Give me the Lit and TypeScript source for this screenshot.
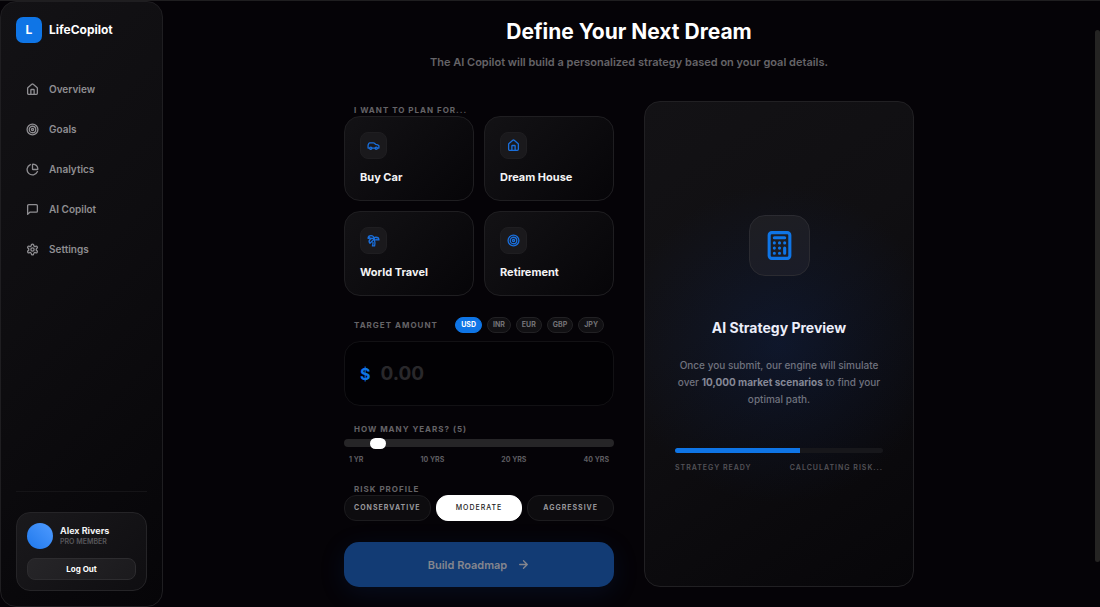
import { LitElement, html, css, svg } from "lit";
import { customElement, property, state } from "lit/decorators.js";
import { classMap } from "lit/directives/class-map.js";

const ICONS: Record<string, unknown> = {
  home: svg`<path d="M15 21v-8a1 1 0 0 0-1-1h-4a1 1 0 0 0-1 1v8"/><path d="M3 10a2 2 0 0 1 .709-1.528l7-5.999a2 2 0 0 1 2.582 0l7 5.999A2 2 0 0 1 21 10v9a2 2 0 0 1-2 2H5a2 2 0 0 1-2-2z"/>`,
  target: svg`<circle cx="12" cy="12" r="10"/><circle cx="12" cy="12" r="6"/><circle cx="12" cy="12" r="2"/>`,
  pie: svg`<path d="M21 12c.552 0 1.005-.449.95-.998a10 10 0 0 0-8.953-8.951c-.55-.055-.998.398-.998.95v8a1 1 0 0 0 1 1z"/><path d="M21.21 15.89A10 10 0 1 1 8 2.83"/>`,
  message: svg`<path d="M21 15a2 2 0 0 1-2 2H7l-4 4V5a2 2 0 0 1 2-2h14a2 2 0 0 1 2 2z"/>`,
  gear: svg`<path d="M12.22 2h-.44a2 2 0 0 0-2 2v.18a2 2 0 0 1-1 1.73l-.43.25a2 2 0 0 1-2 0l-.15-.08a2 2 0 0 0-2.73.73l-.22.38a2 2 0 0 0 .73 2.73l.15.1a2 2 0 0 1 1 1.72v.51a2 2 0 0 1-1 1.74l-.15.09a2 2 0 0 0-.73 2.73l.22.38a2 2 0 0 0 2.73.73l.15-.08a2 2 0 0 1 2 0l.43.25a2 2 0 0 1 1 1.73V20a2 2 0 0 0 2 2h.44a2 2 0 0 0 2-2v-.18a2 2 0 0 1 1-1.73l.43-.25a2 2 0 0 1 2 0l.15.08a2 2 0 0 0 2.73-.73l.22-.39a2 2 0 0 0-.73-2.73l-.15-.08a2 2 0 0 1-1-1.74v-.5a2 2 0 0 1 1-1.74l.15-.09a2 2 0 0 0 .73-2.73l-.22-.38a2 2 0 0 0-2.73-.73l-.15.08a2 2 0 0 1-2 0l-.43-.25a2 2 0 0 1-1-1.73V4a2 2 0 0 0-2-2z"/><circle cx="12" cy="12" r="3"/>`,
  car: svg`<path d="M19 17h2c.6 0 1-.4 1-1v-3c0-.9-.7-1.7-1.5-1.9C18.7 10.6 16 10 16 10s-1.3-1.4-2.2-2.3c-.5-.4-1.1-.7-1.8-.7H5c-.6 0-1.1.4-1.4.9l-1.4 2.9A3.7 3.7 0 0 0 2 12v4c0 .6.4 1 1 1h2"/><circle cx="7" cy="17" r="2"/><path d="M9 17h6"/><circle cx="17" cy="17" r="2"/>`,
  palm: svg`<path d="M13 8c0-2.76-2.46-5-5.5-5S2 5.24 2 8h2l1-1 1 1h4"/><path d="M13 7.14A5.82 5.82 0 0 1 16.5 6c3.04 0 5.5 2.24 5.5 5h-3l-1-1-1 1h-3"/><path d="M5.89 9.71c-2.15 2.15-2.3 5.47-.35 7.43l4.24-4.25.7-.7.71-.71 2.12-2.12c-1.95-1.96-5.27-1.8-7.42.35"/><path d="M11 15.5c.5 2.5-.17 4.5-1 6.5h4c2-5.5-.5-12-1-14"/>`,
  calculator: svg`<rect width="16" height="20" x="4" y="2" rx="2"/><path d="M8 6h8M16 14v4M16 10h.01M12 10h.01M8 10h.01M12 14h.01M8 14h.01M12 18h.01M8 18h.01"/>`,
  arrow: svg`<path d="M5 12h14M12 5l7 7-7 7"/>`,
};

@customElement("app-icon")
class AppIcon extends LitElement {
  @property() name = "home";

  static styles = css`
    :host { display: block; width: 13px; height: 13px; flex: none; }
    .glyph {
      display: block; width: 100%; height: 100%; fill: none; stroke: currentColor;
      stroke-width: 2.4; stroke-linecap: round; stroke-linejoin: round;
    }
  `;

  render() {
    return html`<svg class="glyph" viewBox="0 0 24 24" aria-hidden="true">${ICONS[this.name]}</svg>`;
  }
}

@customElement("app-sidebar")
class AppSidebar extends LitElement {
  static styles = css`
    :host { display: flex; }
    * { box-sizing: border-box; }
    .panel {
      flex: 1; display: flex; flex-direction: column; padding: 15px;
      border: 1px solid #1f1e21; border-radius: 16px;
      background: linear-gradient(135deg, #131215 0%, #0e0d10 45%, #060508 100%);
    }
    .brand { display: flex; align-items: center; gap: 7px; font-size: 12px; line-height: 16px; font-weight: 700; color: #fff; }
    .mark {
      width: 26px; height: 26px; border-radius: 7px; background: #0f75e6;
      display: grid; place-items: center;
    }
    .nav { display: flex; flex-direction: column; gap: 4px; margin-top: 28px; }
    .item {
      display: flex; align-items: center; gap: 10px; height: 36px; padding: 0 10px;
      font-size: 10px; line-height: 16px; font-weight: 600; color: #8f8e92; text-decoration: none;
    }
    .foot { margin-top: auto; padding-top: 20px; border-top: 1px solid #151417; }
    .user {
      display: flex; flex-direction: column; gap: 9px; padding: 10px;
      border: 1px solid #252427; border-radius: 14px;
      background: linear-gradient(135deg, #1a191c, #0f0e11);
    }
    .who { display: flex; align-items: center; gap: 7px; }
    .avatar { width: 26px; height: 26px; border-radius: 50%; background: linear-gradient(45deg, #1f78ec, #4f9bff); }
    .name { font-size: 9px; line-height: 12px; font-weight: 700; color: #f3f3f4; }
    .tier { font-size: 7px; line-height: 10px; font-weight: 600; color: #58575b; }
    .logout {
      height: 22px; border: 1px solid #2d2c2f; border-radius: 8px; padding: 0;
      background: linear-gradient(135deg, #262528, #1b1a1d);
      font: 700 8px/12px Inter, "Liberation Sans", sans-serif; color: #fff;
    }
  `;

  private items = [
    ["home", "Overview"],
    ["target", "Goals"],
    ["pie", "Analytics"],
    ["message", "AI Copilot"],
    ["gear", "Settings"],
  ];

  render() {
    return html`
      <aside class="panel">
        <div class="brand"><span class="mark">L</span>LifeCopilot</div>
        <nav class="nav">
          ${this.items.map(
            ([icon, label]) => html`<a class="item" href="#"><app-icon name=${icon}></app-icon>${label}</a>`
          )}
        </nav>
        <div class="foot">
          <div class="user">
            <div class="who">
              <div class="avatar"></div>
              <div>
                <div class="name">Alex Rivers</div>
                <div class="tier">PRO MEMBER</div>
              </div>
            </div>
            <button class="logout">Log Out</button>
          </div>
        </div>
      </aside>
    `;
  }
}

@customElement("goal-form")
class GoalForm extends LitElement {
  @state() private currency = "USD";
  @state() private risk = "MODERATE";
  @state() private years = 5;

  static styles = css`
    :host { display: block; min-width: 0; }
    * { box-sizing: border-box; }
    button, input { font-family: inherit; margin: 0; }
    .label {
      display: block; padding: 0 10px; font-size: 8px; line-height: 12px;
      font-weight: 700; letter-spacing: 1px; color: #656468; white-space: nowrap;
    }
    .first { padding-top: 3px; }
    .plans { display: grid; grid-template-columns: 1fr 1fr; gap: 10px; }
    .plan {
      display: flex; flex-direction: column; align-items: flex-start; gap: 10px;
      padding: 15px; border: 1px solid #1f1e21; border-radius: 16px;
      background: linear-gradient(135deg, #131215, #060508);
      font-size: 11px; line-height: 16px; font-weight: 700; color: #f3f3f4; text-align: left;
    }
    .tile {
      width: 27px; height: 27px; border-radius: 8px; background: #1a191c;
      border: 1px solid #1f1e21; display: grid; place-items: center; color: #1a6fdc;
    }
    .row { display: flex; align-items: center; justify-content: space-between; padding-right: 10px; margin: 21px 0 8px; }
    .row .label { padding-right: 0; }
    .pills { display: flex; gap: 5px; }
    .pill {
      height: 16px; padding: 0 5px; border: 1px solid #222124; border-radius: 8px;
      background: #111013; font-size: 7px; line-height: 12px; font-weight: 700; color: #747377;
    }
    .pill.on { background: #0f75e6; border-color: #0f75e6; color: #fff; }
    .amount {
      display: flex; align-items: center; gap: 10px; height: 65px; padding: 0 15px;
      border: 1px solid #121114; border-radius: 16px; background: #020104;
    }
    .sign { font-size: 16px; line-height: 20px; font-weight: 700; color: #0f75e6; }
    .field {
      flex: 1; min-width: 0; padding: 0; border: 0; outline: 0; background: none;
      font-size: 19px; line-height: 24px; font-weight: 700; color: #fff;
    }
    .field::placeholder { color: #29282b; opacity: 1; }
    .years { margin-top: 17px; }
    .range {
      display: block; -webkit-appearance: none; appearance: none; width: 100%; height: 11px;
      margin: 2px 0 0; background: none; outline: 0;
    }
    .range::-webkit-slider-runnable-track { height: 8px; border-radius: 4px; background: #262527; }
    .range::-webkit-slider-thumb {
      -webkit-appearance: none; width: 16px; height: 11px; margin-top: -1px; border-radius: 6px; background: #fff;
    }
    .ticks {
      display: flex; justify-content: space-between; padding: 0 5px; margin-top: 6px;
      font-size: 7px; line-height: 12px; font-weight: 700; color: #5e5d61;
    }
    .risk-label { margin-top: 17px; }
    .risks { display: grid; grid-template-columns: repeat(3, minmax(0, 1fr)); gap: 5px; }
    .risk {
      height: 26px; padding: 0; border: 1px solid #1c1b1e; border-radius: 12px; background: #0d0c0f;
      font-size: 7px; line-height: 12px; font-weight: 700; letter-spacing: 1px; color: #98979b;
    }
    .risk.on { background: #fff; border-color: #fff; color: #222; font-weight: 500; }
    .submit {
      display: flex; align-items: center; justify-content: center; gap: 10px;
      width: 100%; height: 45px; margin-top: 21px; border: 0; border-radius: 15px;
      background: #123b74; box-shadow: 0 6px 26px rgba(20, 70, 150, 0.16);
      font-size: 11px; line-height: 16px; font-weight: 600; color: #85868e;
    }
  `;

  private plans = [
    ["car", "Buy Car"],
    ["home", "Dream House"],
    ["palm", "World Travel"],
    ["target", "Retirement"],
  ];

  render() {
    return html`
      <form @submit=${(e: Event) => e.preventDefault()}>
        <div class="label first" id="plan">I WANT TO PLAN FOR...</div>
        <div class="plans" role="group" aria-labelledby="plan">
          ${this.plans.map(
            ([icon, name]) => html`
              <button type="button" class="plan">
                <span class="tile"><app-icon name=${icon}></app-icon></span>
                <span>${name}</span>
              </button>
            `
          )}
        </div>

        <div class="row">
          <label class="label" for="amount">TARGET AMOUNT</label>
          <div class="pills">
            ${["USD", "INR", "EUR", "GBP", "JPY"].map(
              (c) => html`<button
                type="button"
                class=${classMap({ pill: true, on: c === this.currency })}
                @click=${() => (this.currency = c)}
              >${c}</button>`
            )}
          </div>
        </div>
        <div class="amount">
          <span class="sign">$</span>
          <input class="field" id="amount" inputmode="decimal" placeholder="0.00" />
        </div>

        <label class="label years" for="years">HOW MANY YEARS? (${this.years})</label>
        <input
          class="range" id="years" type="range" min="1" max="40" .value=${String(this.years)}
          @input=${(e: Event) => (this.years = Number((e.target as HTMLInputElement).value))}
        />
        <div class="ticks"><span>1 YR</span><span>10 YRS</span><span>20 YRS</span><span>40 YRS</span></div>

        <div class="label risk-label" id="risk">RISK PROFILE</div>
        <div class="risks" role="group" aria-labelledby="risk">
          ${["CONSERVATIVE", "MODERATE", "AGGRESSIVE"].map(
            (r) => html`<button
              type="button"
              class=${classMap({ risk: true, on: r === this.risk })}
              @click=${() => (this.risk = r)}
            >${r}</button>`
          )}
        </div>

        <button class="submit" disabled>Build Roadmap <app-icon name="arrow"></app-icon></button>
      </form>
    `;
  }
}

@customElement("strategy-preview")
class StrategyPreview extends LitElement {
  @property({ type: Number }) progress = 60;

  static styles = css`
    :host { display: flex; min-width: 0; }
    * { box-sizing: border-box; }
    .card {
      flex: 1; display: flex; flex-direction: column; align-items: center; justify-content: center;
      padding: 0 30px; border: 1px solid #212023; border-radius: 16px; text-align: center;
      background:
        radial-gradient(circle 160px at 50% 50%, rgba(16, 50, 120, 0.26), rgba(16, 50, 120, 0.12) 50%, transparent),
        linear-gradient(145deg, #131215 0%, #100f12 40%, #070609 100%);
    }
    .tile {
      width: 61px; height: 61px; border-radius: 16px; border: 1px solid #2b2b31;
      background: linear-gradient(160deg, #1e1e22, #1a1c28);
      display: grid; place-items: center; color: #0f75e6;
    }
    .calc { width: 31px; height: 31px; }
    .title { margin: 42px 0 0; font-size: 14px; line-height: 20px; font-weight: 700; color: #eceefa; }
    .text { margin: 19px 0 0; font-size: 10px; line-height: 17px; font-weight: 500; color: #6f727e; }
    .strong { font-weight: 700; color: #858896; }
    .track { width: 100%; height: 5px; margin-top: 40px; border-radius: 3px; background: #17171b; overflow: hidden; }
    .bar { height: 100%; background: #0f75e6; }
    .legend {
      width: 100%; display: flex; justify-content: space-between; margin-top: 9px;
      font-size: 7px; line-height: 12px; font-weight: 600; letter-spacing: 1px; color: #535257;
      white-space: nowrap;
    }
  `;

  render() {
    return html`
      <section class="card">
        <div class="tile"><app-icon class="calc" name="calculator"></app-icon></div>
        <h2 class="title">AI Strategy Preview</h2>
        <p class="text">
          Once you submit, our engine will simulate over
          <strong class="strong">10,000 market scenarios</strong> to find your optimal path.
        </p>
        <div class="track"><div class="bar" style="width:${this.progress}%"></div></div>
        <div class="legend"><span>STRATEGY READY</span><span>CALCULATING RISK...</span></div>
      </section>
    `;
  }
}

@customElement("app-root")
class AppRoot extends LitElement {
  static styles = css`
    :host {
      display: grid; grid-template-columns: 163px minmax(0, 1fr) 5px; height: 100vh;
      box-sizing: border-box; border-top: 1px solid #1f1e20; background: #050307; overflow: hidden;
      font-family: Inter, "Liberation Sans", sans-serif;
    }
    .main { padding: 15px 16px 20px; overflow: hidden; }
    .head { text-align: center; }
    .heading { margin: 0; font-size: 21px; line-height: 32px; font-weight: 700; color: #fff; }
    .lead { margin: 6px 0 0; font-size: 11px; line-height: 16px; font-weight: 600; color: #656468; }
    .columns {
      display: grid; grid-template-columns: repeat(2, minmax(0, 1fr)); gap: 30px;
      max-width: 570px; margin: 31px auto 0;
    }
    .rail { display: flex; flex-direction: column; padding: 29px 0 45px; }
    .thumb { flex: 1; border-radius: 3px; background: #252423; }
  `;

  render() {
    return html`
      <app-sidebar></app-sidebar>
      <main class="main">
        <header class="head">
          <h1 class="heading">Define Your Next Dream</h1>
          <p class="lead">The AI Copilot will build a personalized strategy based on your goal details.</p>
        </header>
        <div class="columns">
          <goal-form></goal-form>
          <strategy-preview></strategy-preview>
        </div>
      </main>
      <div class="rail"><div class="thumb"></div></div>
    `;
  }
}
